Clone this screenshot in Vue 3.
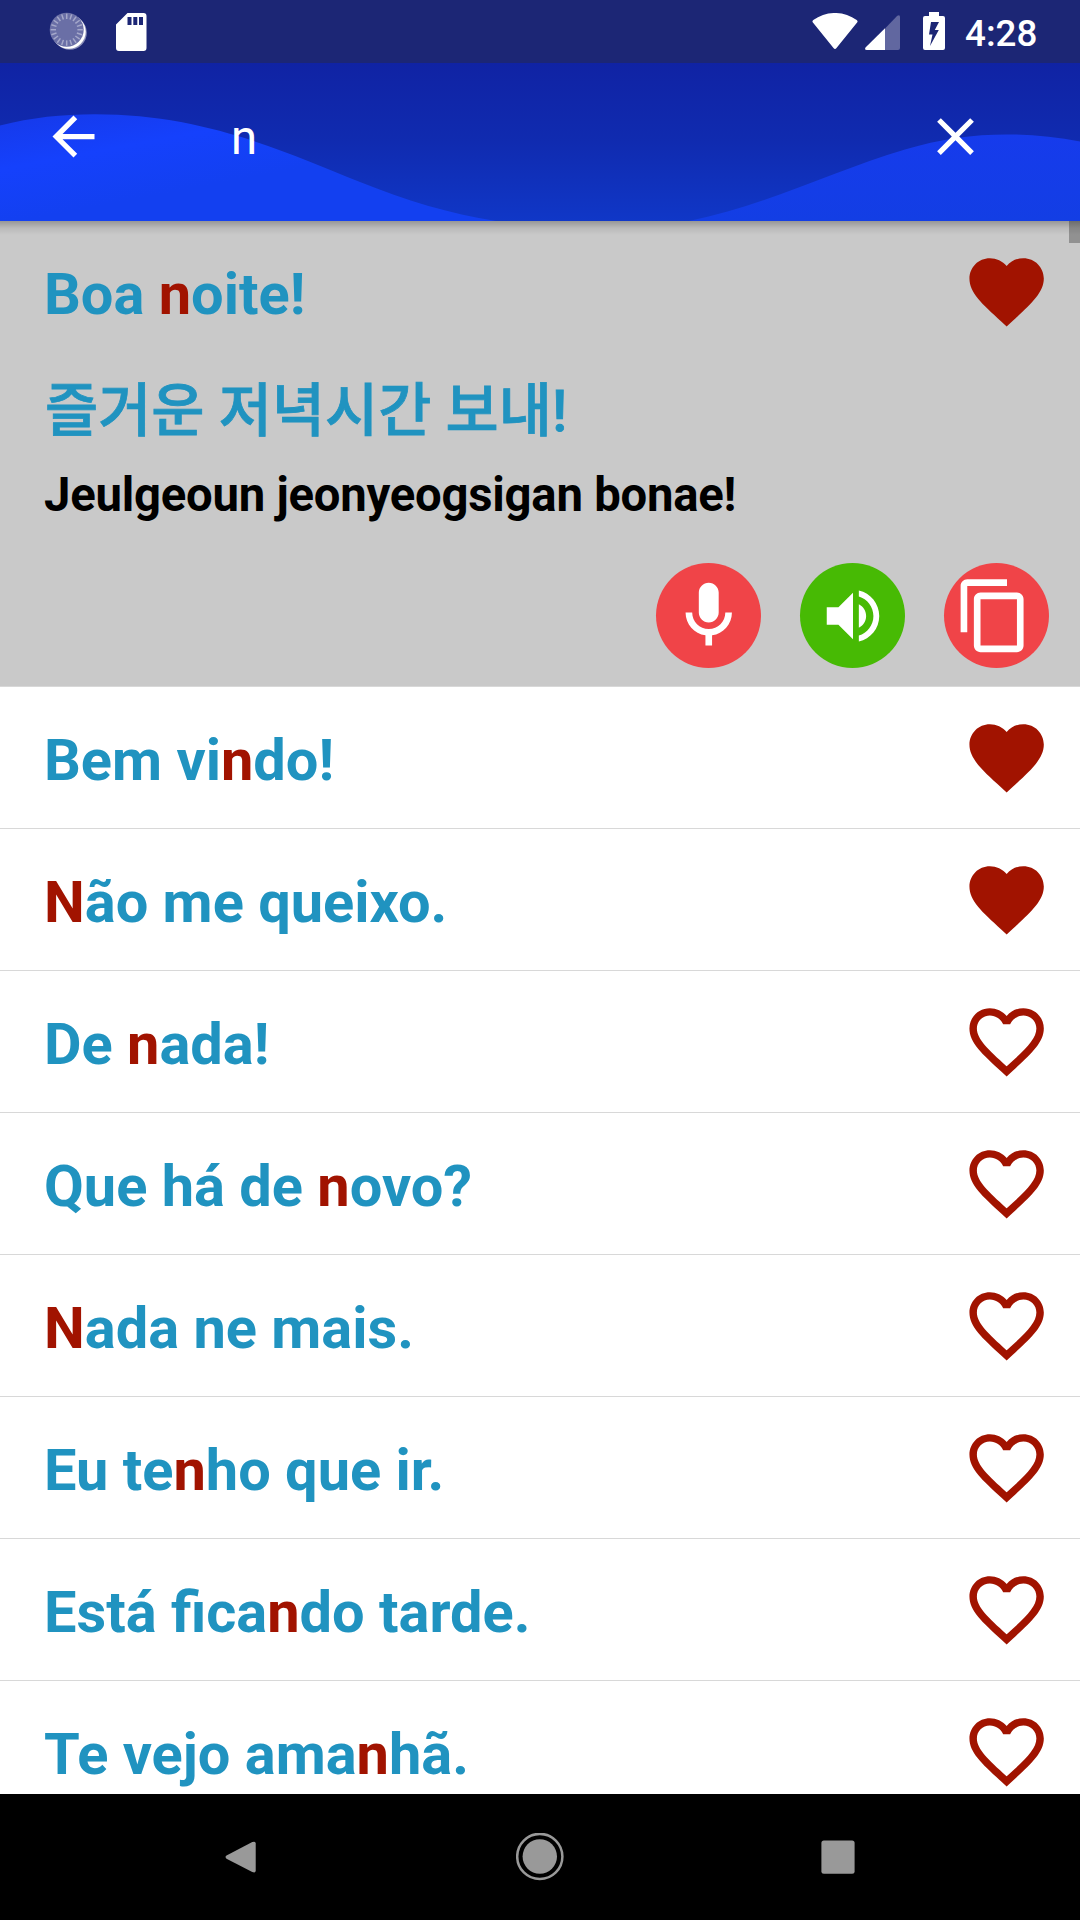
<script setup>
import { ref } from 'vue'

const query = ref('n')

const phrases = [
  { text: 'Boa noite!', favorite: true, open: true, translation: '즐거운 저녁시간 보내!', reading: 'Jeulgeoun jeonyeogsigan bonae!' },
  { text: 'Bem vindo!', favorite: true },
  { text: 'Não me queixo.', favorite: true },
  { text: 'De nada!', favorite: false },
  { text: 'Que há de novo?', favorite: false },
  { text: 'Nada ne mais.', favorite: false },
  { text: 'Eu tenho que ir.', favorite: false },
  { text: 'Está ficando tarde.', favorite: false },
  { text: 'Te vejo amanhã.', favorite: false },
]

// Splits a phrase around the first match of the search query
function split(text) {
  const at = text.toLowerCase().indexOf(query.value)
  const end = at + query.value.length
  return { before: text.slice(0, at), hit: text.slice(at, end), after: text.slice(end) }
}

const rows = phrases.map((p) => ({ ...p, parts: split(p.text) }))

const heartFull =
  'M12 21.35l-1.45-1.32C5.4 15.36 2 12.28 2 8.5 2 5.42 4.42 3 7.5 3c1.74 0 3.41.81 4.5 2.09C13.09 3.81 14.76 3 16.5 3 19.58 3 22 5.42 22 8.5c0 3.78-3.4 6.86-8.55 11.54L12 21.35z'
const heartLine =
  'M16.5 3c-1.74 0-3.41.81-4.5 2.09C10.91 3.81 9.24 3 7.5 3 4.42 3 2 5.42 2 8.5c0 3.78 3.4 6.86 8.55 11.54L12 21.35l1.45-1.32C18.6 15.36 22 12.28 22 8.5 22 5.42 19.58 3 16.5 3zm-4.4 15.55l-.1.1-.1-.1C7.14 14.24 4 11.39 4 8.5 4 6.5 5.5 5 7.5 5c1.54 0 3.04.99 3.57 2.36h1.87C13.46 5.99 14.96 5 16.5 5c2 0 3.5 1.5 3.5 3.5 0 2.89-3.14 5.74-7.9 10.05z'

const ticks = Array.from({ length: 20 }, (_, i) => i * 18)
</script>

<template>
  <div class="screen">
    <div class="status">
      <svg class="sync" width="40" height="40" viewBox="0 0 40 40">
        <circle cx="21.800" cy="21.800" r="17" fill="#8a8eb9" />
        <circle cx="20.700" cy="20.700" r="17" fill="#fff" />
        <circle cx="18.700" cy="18.700" r="17" fill="#6a6fa6" />
        <line
          v-for="a in ticks"
          :key="a"
          x1="18.700"
          y1="2.600"
          x2="18.700"
          y2="8"
          stroke="#a5a8ca"
          stroke-width="1.500"
          :transform="`rotate(${a} 18.7 18.7)`"
        />
      </svg>
      <svg class="sd" width="31" height="38" viewBox="0 0 31 38">
        <path fill="#fff" fill-rule="evenodd" d="M11.500 0H27.500a3 3 0 0 1 3 3v32a3 3 0 0 1-3 3h-24.500a3 3 0 0 1-3-3V11.500zM11.500 4v8h4V4zM17.300 4v8h4V4zM23 4v8h4V4z" />
      </svg>
      <div class="grow"></div>
      <svg class="wifi" width="46" height="37" viewBox="0 0 46 37">
        <path fill="#fff" d="M.9 9.600Q-.2 8.200 1.300 7.100C14-2.400 32-2.400 44.700 7.100Q46.200 8.200 45.100 9.600L24.500 35Q23 36.800 21.500 35z" />
      </svg>
      <svg class="signal" width="35" height="35" viewBox="0 0 35 35">
        <path fill="#6167a0" d="M20 13.500L32.300.800Q35-.8 35 2V33a2 2 0 0 1-2 2H20z" />
        <path fill="#fff" d="M20 13.200V35H1.800Q-.8 35 .5 32.500z" />
      </svg>
      <svg class="battery" width="22" height="38" viewBox="0 0 22 38">
        <path fill="#fff" fill-rule="evenodd" d="M6 0h10v4h4a2 2 0 0 1 2 2v30a2 2 0 0 1-2 2H2a2 2 0 0 1-2-2V6a2 2 0 0 1 2-2h4zM8 10L6 22.500h3.500L7 34 15.800 18h-4L16 10z" />
      </svg>
      <span class="clock">4:28</span>
    </div>

    <header class="toolbar">
      <svg class="waves" width="1080" height="158" viewBox="0 63 1080 158">
        <defs>
          <linearGradient id="sky" x1="0" y1="0" x2="0" y2="1">
            <stop offset="0" stop-color="#1023a4" />
            <stop offset="0.5" stop-color="#102bb0" />
            <stop offset="1" stop-color="#1037c7" />
          </linearGradient>
          <linearGradient id="left" gradientUnits="userSpaceOnUse" x1="0" y1="114" x2="20" y2="221">
            <stop offset="0" stop-color="#1639e9" />
            <stop offset="0.5" stop-color="#1541fc" />
            <stop offset="1" stop-color="#1340f0" />
          </linearGradient>
          <linearGradient id="right" gradientUnits="userSpaceOnUse" x1="0" y1="134" x2="0" y2="221">
            <stop offset="0" stop-color="#163bec" />
            <stop offset="1" stop-color="#133ee4" />
          </linearGradient>
        </defs>
        <rect y="63" width="1080" height="158" fill="url(#sky)" />
        <path fill="url(#left)" d="M0 125.500C32 117.500 62 114.300 95 114.300C205 114.300 285 152 360 182C405 200 450 214 496 221H0z" />
        <path fill="url(#right)" d="M689 221C770 204 835 170 905 149.500C965 131 1025 131 1080 141.500V221z" />
      </svg>
      <svg class="back" width="63" height="63" viewBox="0 0 24 24">
        <path fill="#fff" d="M20 11H7.830l5.590-5.590L12 4l-8 8 8 8 1.410-1.410L7.830 13H20v-2z" />
      </svg>
      <span class="query">{{ query }}</span>
      <svg class="clear" width="63" height="63" viewBox="0 0 24 24">
        <path fill="#fff" d="M19 6.410L17.590 5 12 10.590 6.410 5 5 6.410 10.590 12 5 17.590 6.410 19 12 13.410 17.590 19 19 17.590 13.410 12z" />
      </svg>
    </header>

    <main class="list">
      <div class="scrollbar"></div>
      <div class="edge"></div>
      <section v-for="row in rows" :key="row.text" class="item" :class="{ open: row.open }">
        <div class="row">
          <p class="phrase">{{ row.parts.before }}<span class="hit">{{ row.parts.hit }}</span>{{ row.parts.after }}</p>
          <svg width="89.250" height="89.250" viewBox="0 0 24 24">
            <path fill="#a11300" :d="row.favorite ? heartFull : heartLine" />
          </svg>
        </div>
        <template v-if="row.open">
          <p class="translation">{{ row.translation }}</p>
          <p class="reading">{{ row.reading }}</p>
          <div class="actions">
            <div class="btn red">
              <svg width="79.500" height="79.500" viewBox="0 0 24 24">
                <path fill="#fff" d="M12 14c1.660 0 3-1.340 3-3V5c0-1.660-1.340-3-3-3S9 3.340 9 5v6c0 1.660 1.340 3 3 3zM17 11c0 2.760-2.240 5-5 5s-5-2.240-5-5H5c0 3.530 2.610 6.430 6 6.920V21h2v-3.080c3.390-.49 6-3.390 6-6.920h-2z" />
              </svg>
            </div>
            <div class="btn green">
              <svg width="70" height="70" viewBox="0 0 24 24">
                <path fill="#fff" d="M3 9v6h4l5 5V4L7 9H3zm13.500 3c0-1.770-1.020-3.290-2.500-4.030v8.050c1.480-.73 2.500-2.250 2.500-4.020zM14 3.230v2.060c2.890.86 5 3.540 5 6.710s-2.110 5.850-5 6.710v2.060c4.010-.91 7-4.490 7-8.770s-2.990-7.860-7-8.770z" />
              </svg>
            </div>
            <div class="btn red copy">
              <svg width="79.500" height="79.500" viewBox="0 0 24 24">
                <path fill="#fff" d="M16 1H4c-1.100 0-2 .9-2 2v14h2V3h12V1zm3 4H8c-1.100 0-2 .9-2 2v14c0 1.100.9 2 2 2h11c1.100 0 2-.9 2-2V7c0-1.100-.9-2-2-2zm0 16H8V7h11v14z" />
              </svg>
            </div>
          </div>
        </template>
      </section>
    </main>

    <nav class="nav">
      <svg width="48" height="48" viewBox="0 0 48 48">
        <path fill="#999" d="M9.200 25.800Q7.200 24 9.200 22.200L35.500 6.800Q39 5.200 39 8.500V39.500Q39 42.800 35.500 41.200z" transform="translate(.5 3.200) scale(.98 .87)" />
      </svg>
      <svg width="48" height="48" viewBox="0 0 48 48">
        <circle cx="23.800" cy="23.500" r="22.600" fill="none" stroke="#999" stroke-width="2.500" />
        <circle cx="23.800" cy="23.500" r="17.200" fill="#999" />
      </svg>
      <svg width="48" height="48" viewBox="0 0 48 48">
        <rect x="7.400" y="7.500" width="33.200" height="33.200" rx="2.500" fill="#999" />
      </svg>
    </nav>
  </div>
</template>

<style>
body {
  margin: 0;
  overflow: hidden;
}
</style>

<style scoped>
.screen {
  width: 1080px;
  height: 1920px;
  display: flex;
  flex-direction: column;
  overflow: hidden;
  background: #fff;
  font-family: Roboto, 'Noto Sans CJK KR', sans-serif;
}
svg {
  display: block;
  flex: none;
}
p {
  margin: 0;
  white-space: nowrap;
}
.status {
  height: 63px;
  flex: none;
  display: flex;
  align-items: flex-start;
  box-sizing: border-box;
  padding: 12px 42px 0 48px;
  background: #1c2675;
}
.sync {
  margin-top: -1px;
}
.sd {
  margin: 0.5px 0 0 28.300px;
}
.grow {
  flex: 1;
}
.wifi {
  margin-top: 1px;
}
.signal {
  margin: 3px 0 0 7px;
}
.battery {
  margin-left: 23px;
}
.clock {
  margin-left: 20px;
  width: 73px;
  font-size: 36.750px;
  line-height: 43px;
  font-weight: 500;
  color: #fff;
}
.toolbar {
  position: relative;
  height: 158px;
  flex: none;
  display: flex;
  align-items: center;
  box-sizing: border-box;
  padding: 0 93px 11px 42px;
}
.waves {
  position: absolute;
  inset: 0;
}
.back,
.clear,
.query {
  position: relative;
}
.query {
  flex: 1;
  margin: 3px 0 0 126px;
  font-size: 47.250px;
  line-height: 56px;
  color: #fff;
}
.list {
  position: relative;
  flex: 1;
  min-height: 0;
  overflow: hidden;
}
.edge {
  position: absolute;
  inset: 0 0 auto;
  height: 14px;
  background: linear-gradient(rgba(0, 0, 0, 0.25), rgba(0, 0, 0, 0.08) 50%, transparent);
}
.scrollbar {
  position: absolute;
  top: 0;
  right: 0;
  width: 11px;
  height: 22px;
  background: #919191;
}
.item {
  border-bottom: 1px solid #d8d8d8;
}
.item.open {
  height: 465px;
  background: #c9c9c9;
}
.row {
  height: 141px;
  display: flex;
  align-items: center;
  justify-content: space-between;
  padding: 0 29px 0 44px;
}
.phrase {
  padding-top: 5px;
  font-size: 57.750px;
  line-height: 68px;
  font-weight: 700;
  color: #2093c0;
}
.hit {
  color: #a11300;
}
.translation {
  height: 87px;
  padding: 4px 0 0 45px;
  font-size: 57.750px;
  line-height: 91px;
  font-weight: 500;
  -webkit-text-stroke: 0.8px #2093c0;
  color: #2093c0;
}
.reading {
  padding: 14px 0 0 44px;
  font-size: 47.250px;
  line-height: 56px;
  font-weight: 700;
  letter-spacing: -0.230px;
  color: #000;
}
.actions {
  display: flex;
  justify-content: flex-end;
  gap: 39px;
  padding: 40px 31px 0 0;
}
.btn {
  width: 105px;
  height: 105px;
  border-radius: 50%;
  display: flex;
  align-items: center;
  justify-content: center;
}
.red {
  background: #f04448;
}
.green {
  background: #47ba04;
}
.copy svg {
  margin-right: 5px;
}
.nav {
  height: 126px;
  flex: none;
  display: flex;
  align-items: center;
  justify-content: center;
  gap: 250.500px;
  padding-right: 1px;
  background: #000;
}
</style>
